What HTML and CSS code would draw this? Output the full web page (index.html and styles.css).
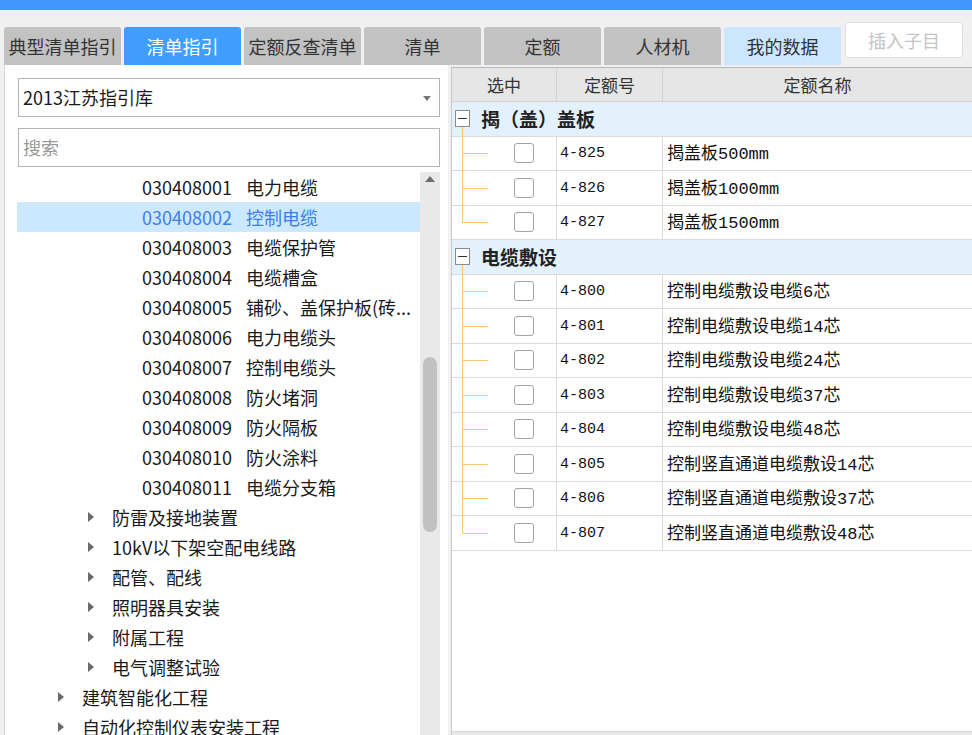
FILE: index.html
```html
<!DOCTYPE html>
<html lang="zh-CN">
<head>
<meta charset="utf-8">
<title>清单指引</title>
<link rel="stylesheet" href="styles.css">
</head>
<body>
<div class="topbar"></div>
<div class="tabbar">
  <div class="tab">典型清单指引</div>
  <div class="tab active">清单指引</div>
  <div class="tab">定额反查清单</div>
  <div class="tab">清单</div>
  <div class="tab">定额</div>
  <div class="tab">人材机</div>
  <div class="tab light">我的数据</div>
  <button class="insert">插入子目</button>
</div>
<div class="main">
  <div class="left">
    <div class="select">2013江苏指引库<span class="caret"></span></div>
    <div class="search">搜索</div>
    <div class="treewrap">
      <ul class="tree">
        <li class="row l3"><span class="code">030408001</span><span class="name">电力电缆</span></li>
        <li class="row l3 sel"><span class="code">030408002</span><span class="name">控制电缆</span></li>
        <li class="row l3"><span class="code">030408003</span><span class="name">电缆保护管</span></li>
        <li class="row l3"><span class="code">030408004</span><span class="name">电缆槽盒</span></li>
        <li class="row l3"><span class="code">030408005</span><span class="name">铺砂、盖保护板(砖...</span></li>
        <li class="row l3"><span class="code">030408006</span><span class="name">电力电缆头</span></li>
        <li class="row l3"><span class="code">030408007</span><span class="name">控制电缆头</span></li>
        <li class="row l3"><span class="code">030408008</span><span class="name">防火堵洞</span></li>
        <li class="row l3"><span class="code">030408009</span><span class="name">防火隔板</span></li>
        <li class="row l3"><span class="code">030408010</span><span class="name">防火涂料</span></li>
        <li class="row l3"><span class="code">030408011</span><span class="name">电缆分支箱</span></li>
        <li class="row l2"><span class="arrow"></span>防雷及接地装置</li>
        <li class="row l2"><span class="arrow"></span>10kV以下架空配电线路</li>
        <li class="row l2"><span class="arrow"></span>配管、配线</li>
        <li class="row l2"><span class="arrow"></span>照明器具安装</li>
        <li class="row l2"><span class="arrow"></span>附属工程</li>
        <li class="row l2"><span class="arrow"></span>电气调整试验</li>
        <li class="row l1"><span class="arrow"></span>建筑智能化工程</li>
        <li class="row l1"><span class="arrow"></span>自动化控制仪表安装工程</li>
      </ul>
      <div class="vscroll"><div class="up"></div><div class="thumb"></div></div>
    </div>
  </div>
  <div class="right">
    <div class="grid">
      <div class="hrow"><div class="hc">选中</div><div class="hc">定额号</div><div class="hc">定额名称</div></div>
      <div class="grow"><span class="minus"></span>揭（盖）盖板</div>
      <div class="drow"><div class="c1"><span class="cb"></span></div><div class="c2">4-825</div><div class="c3">揭盖板500mm</div></div>
      <div class="drow"><div class="c1"><span class="cb"></span></div><div class="c2">4-826</div><div class="c3">揭盖板1000mm</div></div>
      <div class="drow last"><div class="c1"><span class="cb"></span></div><div class="c2">4-827</div><div class="c3">揭盖板1500mm</div></div>
      <div class="grow"><span class="minus"></span>电缆敷设</div>
      <div class="drow"><div class="c1"><span class="cb"></span></div><div class="c2">4-800</div><div class="c3">控制电缆敷设电缆6芯</div></div>
      <div class="drow"><div class="c1"><span class="cb"></span></div><div class="c2">4-801</div><div class="c3">控制电缆敷设电缆14芯</div></div>
      <div class="drow"><div class="c1"><span class="cb"></span></div><div class="c2">4-802</div><div class="c3">控制电缆敷设电缆24芯</div></div>
      <div class="drow"><div class="c1"><span class="cb"></span></div><div class="c2">4-803</div><div class="c3">控制电缆敷设电缆37芯</div></div>
      <div class="drow"><div class="c1"><span class="cb"></span></div><div class="c2">4-804</div><div class="c3">控制电缆敷设电缆48芯</div></div>
      <div class="drow"><div class="c1"><span class="cb"></span></div><div class="c2">4-805</div><div class="c3">控制竖直通道电缆敷设14芯</div></div>
      <div class="drow"><div class="c1"><span class="cb"></span></div><div class="c2">4-806</div><div class="c3">控制竖直通道电缆敷设37芯</div></div>
      <div class="drow last"><div class="c1"><span class="cb"></span></div><div class="c2">4-807</div><div class="c3">控制竖直通道电缆敷设48芯</div></div>
    </div>
    <div class="filler"></div>
    <div class="hscroll"></div>
  </div>
</div>
</body>
</html>
```

FILE: styles.css
```css
* { box-sizing: border-box; }
html, body { margin: 0; padding: 0; }
body {
  width: 972px;
  height: 735px;
  overflow: hidden;
  background: #f0f0f0;
  font-family: "Noto Sans CJK SC", "Noto Sans", sans-serif;
  color: #222;
}
.topbar { height: 10px; background: #4297ff; }

.tabbar {
  height: 55px;
  display: flex;
  align-items: flex-end;
  gap: 3px;
  padding-left: 4px;
}
.tab {
  width: 117px;
  height: 38px;
  background: #c2c2c2;
  border-radius: 3px 3px 0 0;
  font-size: 18px;
  line-height: 38px;
  text-align: center;
  color: #333;
  white-space: nowrap;
}
.tab.active { background: #409eff; color: #fff; }
.tab.light { background: #cde6ff; color: #333; }
.insert {
  align-self: flex-start;
  margin-top: 12px;
  margin-left: 1px;
  width: 118px;
  height: 36px;
  background: #fff;
  border: 1px solid #dedede;
  border-radius: 4px;
  font-family: inherit;
  font-size: 18px;
  color: #c4c4c4;
  padding: 0;
}

.main {
  height: 670px;
  display: flex;
  padding-left: 4px;
}
.left {
  width: 444px;
  height: 670px;
  background: #fff;
  border-left: 1px solid #d6d6d6;
  padding: 13px 8px 0 13px;
  display: flex;
  flex-direction: column;
  overflow: hidden;
}
.select, .search {
  width: 422px;
  height: 39px;
  border: 1px solid #b4b4b4;
  padding-left: 4px;
  font-size: 18px;
  line-height: 37px;
  position: relative;
  flex: none;
}
.select { color: #1a1a1a; }
.caret {
  position: absolute;
  right: 8px;
  top: 17px;
  border-top: 5px solid #777;
  border-left: 4px solid transparent;
  border-right: 4px solid transparent;
}
.search { margin-top: 11px; color: #999; }

.treewrap {
  margin-top: 5px;
  margin-left: -1px;
  display: flex;
  flex: 1;
  overflow: hidden;
}
.tree {
  list-style: none;
  margin: 0;
  padding: 0;
  width: 403px;
}
.row {
  height: 30px;
  line-height: 30px;
  font-size: 18px;
  color: #1a1a1a;
  white-space: nowrap;
  display: flex;
  align-items: center;
}
.row.l3 { padding-left: 125px; }
.row.l2 { padding-left: 71px; }
.row.l1 { padding-left: 41px; }
.row.sel { background: #cce8ff; color: #3d7fe6; }
.code { margin-right: 14px; }
.arrow {
  width: 24px;
  height: 30px;
  flex: none;
  position: relative;
}
.arrow::before {
  content: "";
  position: absolute;
  left: 0;
  top: 10px;
  border-left: 6px solid #6a6a6a;
  border-top: 5px solid transparent;
  border-bottom: 5px solid transparent;
}
.vscroll {
  width: 20px;
  background: #e9e9e9;
  position: relative;
  flex: none;
}
.up {
  position: absolute;
  left: 5px;
  top: 4px;
  border-bottom: 6px solid #6e6e6e;
  border-left: 5px solid transparent;
  border-right: 5px solid transparent;
}
.thumb {
  position: absolute;
  left: 3px;
  top: 185px;
  width: 14px;
  height: 175px;
  border-radius: 7px;
  background: #c1c1c1;
}

.right {
  width: 521px;
  margin-left: 3px;
  margin-top: 2px;
  height: 668px;
  background: #fff;
  border-left: 1px solid #c9c9c9;
  border-top: 1px solid #b9b9b9;
  display: flex;
  flex-direction: column;
}
.grid { flex: none; }
.hrow, .drow {
  display: grid;
  grid-template-columns: 105px 106px 1fr;
}
.hrow {
  height: 34px;
  background: #e6e6e6;
  border-bottom: 1px solid #d2d2d2;
}
.hc {
  font-size: 17px;
  line-height: 33px;
  text-align: center;
  color: #333;
  border-right: 1px solid #d2d2d2;
}
.hc:last-child { border-right: none; }
.grow {
  height: 34.5px;
  background: #e3f1fd;
  border-bottom: 1px solid #dadada;
  font-size: 19px;
  font-weight: bold;
  display: flex;
  align-items: center;
  padding-left: 3px;
  color: #222;
}
.minus {
  width: 15px;
  height: 17px;
  border: 1px solid #8a8a8a;
  background: #fff;
  margin-right: 11px;
  position: relative;
  flex: none;
}
.minus::before {
  content: "";
  position: absolute;
  left: 2px;
  right: 2px;
  top: 7px;
  height: 1px;
  background: #333;
}
.minus::after {
  content: "";
  position: absolute;
  left: 6px;
  top: 16px;
  width: 1px;
  height: 10px;
  background: #ffc67a;
}
.drow {
  height: 34.5px;
  border-bottom: 1px solid #dadada;
  font-family: "Liberation Mono", "Noto Sans CJK SC", monospace;
  font-size: 17px;
  color: #111;
}
.drow > div {
  border-right: 1px solid #dadada;
  display: flex;
  align-items: center;
  white-space: nowrap;
}
.drow > div:last-child { border-right: none; }
.c1 { position: relative; padding-left: 62px; }
.c1::before {
  content: "";
  position: absolute;
  left: 10px;
  top: -1px;
  bottom: -1px;
  width: 1px;
  background: #ffc67a;
}
.drow.last .c1::before { bottom: 50%; }
.c1::after {
  content: "";
  position: absolute;
  left: 10px;
  top: 50%;
  width: 26px;
  height: 1px;
  background: #ffc67a;
}
.cb {
  width: 20px;
  height: 20px;
  border: 1px solid #a3a3a3;
  border-radius: 3px;
  background: #fff;
}
.c2 { padding-left: 3px; padding-top: 1px; font-size: 15px; }
.c3 { padding-left: 4px; padding-bottom: 3px; }
.filler { flex: 1; }
.hscroll {
  height: 4px;
  background: #e8e8e8;
  border-top: 1px solid #d6d6d6;
}
```
